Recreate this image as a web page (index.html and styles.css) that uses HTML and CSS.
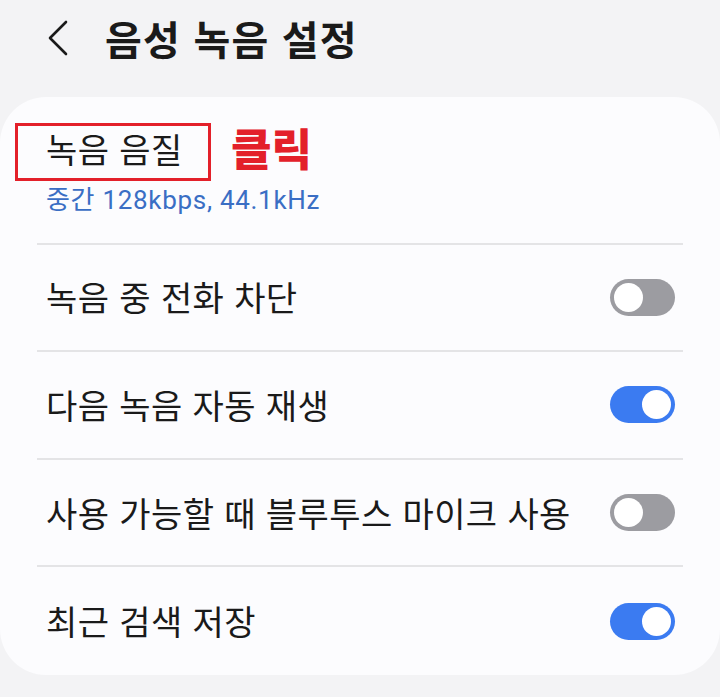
FILE: index.html
```html
<!DOCTYPE html>
<html lang="ko">
<head>
<meta charset="utf-8">
<link rel="stylesheet" href="styles.css">
</head>
<body>
<div class="page">
  <header class="header">
    <svg class="back" width="22" height="36" viewBox="0 0 22 36"><path d="M19 2 L3 18 L19 34" fill="none" stroke="#1a1a1a" stroke-width="2.6" stroke-linecap="round" stroke-linejoin="round"/></svg>
    <h1 class="title">음성 녹음 설정</h1>
  </header>
  <section class="card">
    <div class="item first">
      <div class="label">녹음 음질</div>
      <div class="sub">중간 128kbps, 44.1kHz</div>
      <div class="mark"></div>
      <div class="click">클릭</div>
    </div>
    <div class="item row">
      <div class="label">녹음 중 전화 차단</div>
      <span class="toggle off"></span>
    </div>
    <div class="item row">
      <div class="label">다음 녹음 자동 재생</div>
      <span class="toggle on"></span>
    </div>
    <div class="item row">
      <div class="label">사용 가능할 때 블루투스 마이크 사용</div>
      <span class="toggle off"></span>
    </div>
    <div class="item row last">
      <div class="label">최근 검색 저장</div>
      <span class="toggle on"></span>
    </div>
  </section>
</div>
</body>
</html>
```
FILE: styles.css
```css
* { box-sizing: border-box; }
html, body { margin: 0; padding: 0; }
body {
  background: #f3f3f5;
  font-family: "Noto Sans CJK KR", "Noto Sans", sans-serif;
  color: #1a1a1a;
  width: 720px;
  height: 697px;
  overflow: hidden;
}
.header {
  height: 97px;
  display: flex;
  align-items: center;
  padding: 0 0 22px 47px;
}
.back { display: block; margin-right: 36px; }
.title {
  margin: 0;
  font-size: 40px;
  font-weight: 700;
  letter-spacing: 1.2px;
  line-height: 1;
}
.card {
  background: #fcfcfe;
  border-radius: 46px;
  height: 578px;
  display: flex;
  flex-direction: column;
}
.item {
  position: relative;
  margin: 0 37px;
  border-bottom: 2px solid #e4e4e6;
}
.item.last { border-bottom: none; }
.first {
  height: 148px;
  padding: 31px 0 0 9px;
}
.row {
  height: 108px;
  display: flex;
  align-items: center;
  justify-content: space-between;
  padding: 0 8px 0 9px;
}
.label {
  font-size: 34px;
  line-height: 42px;
  letter-spacing: 0.4px;
}
.sub {
  margin-top: 15px;
  font-family: Roboto, "Noto Sans CJK KR", sans-serif;
  font-size: 26px;
  line-height: 30px;
  letter-spacing: 0.7px;
  color: #3a6ec4;
}
.mark {
  position: absolute;
  left: -22px;
  top: 26px;
  width: 196px;
  height: 58px;
  border: 3px solid #e3202a;
}
.click {
  position: absolute;
  left: 194px;
  top: 24px;
  font-size: 44px;
  font-weight: 900;
  line-height: 52px;
  color: #e3202a;
}
.toggle {
  position: relative;
  width: 65px;
  height: 37px;
  border-radius: 19px;
  flex: none;
}
.toggle::after {
  content: "";
  position: absolute;
  top: 4px;
  width: 29px;
  height: 29px;
  border-radius: 50%;
  background: #fff;
}
.toggle.off { background: #9c9ca1; }
.toggle.off::after { left: 4px; }
.toggle.on { background: #3b7bf1; }
.toggle.on::after { right: 4px; }
```
